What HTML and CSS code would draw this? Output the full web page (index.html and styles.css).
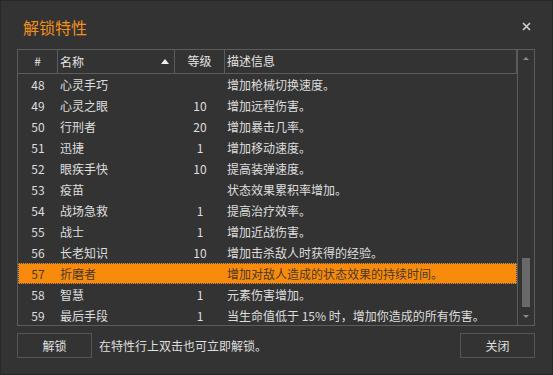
FILE: index.html
```html
<!DOCTYPE html>
<html lang="zh-CN">
<head>
    <meta charset="UTF-8">
    <title>解锁特性</title>
    <link rel="stylesheet" href="styles.css">
</head>
<body>
<div class="window">
    <div class="titlebar">
        <span class="title">解锁特性</span>
        <svg class="close" width="9" height="9" viewBox="0 0 9 9">
            <path d="M1 1 L8 8 M8 1 L1 8" stroke="#d0d0d0" stroke-width="1.6" fill="none"/>
        </svg>
    </div>

    <div class="list">
        <div class="grid">
            <div class="row head">
                <div class="c num">#</div>
                <div class="c name">名称<span class="sort"></span></div>
                <div class="c lvl">等级</div>
                <div class="c desc">描述信息</div>
            </div>
            <div class="row"><div class="c num">48</div><div class="c name">心灵手巧</div><div class="c lvl"></div><div class="c desc">增加枪械切换速度。</div></div>
            <div class="row"><div class="c num">49</div><div class="c name">心灵之眼</div><div class="c lvl">10</div><div class="c desc">增加远程伤害。</div></div>
            <div class="row"><div class="c num">50</div><div class="c name">行刑者</div><div class="c lvl">20</div><div class="c desc">增加暴击几率。</div></div>
            <div class="row"><div class="c num">51</div><div class="c name">迅捷</div><div class="c lvl">1</div><div class="c desc">增加移动速度。</div></div>
            <div class="row"><div class="c num">52</div><div class="c name">眼疾手快</div><div class="c lvl">10</div><div class="c desc">提高装弹速度。</div></div>
            <div class="row"><div class="c num">53</div><div class="c name">疫苗</div><div class="c lvl"></div><div class="c desc">状态效果累积率增加。</div></div>
            <div class="row"><div class="c num">54</div><div class="c name">战场急救</div><div class="c lvl">1</div><div class="c desc">提高治疗效率。</div></div>
            <div class="row"><div class="c num">55</div><div class="c name">战士</div><div class="c lvl">1</div><div class="c desc">增加近战伤害。</div></div>
            <div class="row"><div class="c num">56</div><div class="c name">长老知识</div><div class="c lvl">10</div><div class="c desc">增加击杀敌人时获得的经验。</div></div>
            <div class="row selected"><div class="c num">57</div><div class="c name">折磨者</div><div class="c lvl"></div><div class="c desc">增加对敌人造成的状态效果的持续时间。</div></div>
            <div class="row"><div class="c num">58</div><div class="c name">智慧</div><div class="c lvl">1</div><div class="c desc">元素伤害增加。</div></div>
            <div class="row"><div class="c num">59</div><div class="c name">最后手段</div><div class="c lvl">1</div><div class="c desc">当生命值低于 15% 时，增加你造成的所有伤害。</div></div>
        </div>
        <div class="scrollbar">
            <span class="arrow up"></span>
            <div class="track"><div class="thumb"></div></div>
            <span class="arrow down"></span>
        </div>
    </div>

    <div class="footer">
        <button class="btn">解锁</button>
        <span class="hint">在特性行上双击也可立即解锁。</span>
        <button class="btn close-btn">关闭</button>
    </div>
</div>
</body>
</html>
```

FILE: styles.css
```css
body {
    margin: 0;
    padding: 0;
    background: #333333;
    font-family: "Noto Sans CJK SC", "Noto Sans", sans-serif;
    font-size: 12px;
    color: #dedede;
}
.window {
    width: 553px;
    height: 375px;
    box-sizing: border-box;
    border: 1px solid #282828;
    background: #333333;
    padding: 0 17px 0 16px;
}
.titlebar {
    display: flex;
    align-items: center;
    justify-content: space-between;
    height: 48px;
    padding: 3px 4px 0 6px;
    box-sizing: border-box;
}
.title {
    color: #f39019;
    font-size: 16px;
    line-height: 20px;
}
.list {
    display: flex;
    height: 277px;
    box-sizing: border-box;
    border: 1px solid #5c5c5c;
}
.grid {
    flex: 1;
    overflow: hidden;
}
.row {
    display: flex;
    height: 21px;
    line-height: 21px;
}
.c {
    box-sizing: border-box;
    white-space: nowrap;
}
.num {
    width: 40px;
    text-align: center;
}
.name {
    width: 117px;
    padding-left: 2px;
}
.lvl {
    width: 50px;
    text-align: center;
}
.desc {
    flex: 1;
    padding-left: 2px;
}
.head {
    height: 23px;
    line-height: 22px;
    border-bottom: 1px solid #5c5c5c;
    color: #e4e4e4;
}
.head .c {
    border-right: 1px solid #5c5c5c;
}
.head .name {
    display: flex;
    justify-content: space-between;
    align-items: center;
    padding-right: 5px;
}
.sort {
    width: 0;
    height: 0;
    border-left: 4px solid transparent;
    border-right: 4px solid transparent;
    border-bottom: 5px solid #eeeeee;
}
.selected {
    background: #f98b0c;
    color: #4a3a28;
    outline: 1px dotted #34466a;
    outline-offset: -1px;
}
.scrollbar {
    width: 17px;
    box-sizing: border-box;
    border-left: 1px solid #5c5c5c;
    display: flex;
    flex-direction: column;
    align-items: center;
}
.arrow {
    width: 0;
    height: 0;
    border-left: 3px solid transparent;
    border-right: 3px solid transparent;
}
.arrow.up {
    margin-top: 7px;
    border-bottom: 3px solid #8a8a8a;
}
.arrow.down {
    margin-bottom: 7px;
    border-top: 3px solid #8a8a8a;
}
.track {
    flex: 1;
    width: 100%;
    display: flex;
    flex-direction: column;
    justify-content: flex-end;
    align-items: center;
    padding-bottom: 8px;
    box-sizing: border-box;
}
.thumb {
    width: 8px;
    height: 49px;
    background: #696969;
}
.footer {
    display: flex;
    align-items: center;
    margin-top: 7px;
}
.btn {
    width: 75px;
    height: 25px;
    background: #333333;
    border: 1px solid #555555;
    color: #e0e0e0;
    font-family: inherit;
    font-size: 12px;
    padding: 0;
}
.hint {
    margin-left: 7px;
    flex: 1;
}
```
